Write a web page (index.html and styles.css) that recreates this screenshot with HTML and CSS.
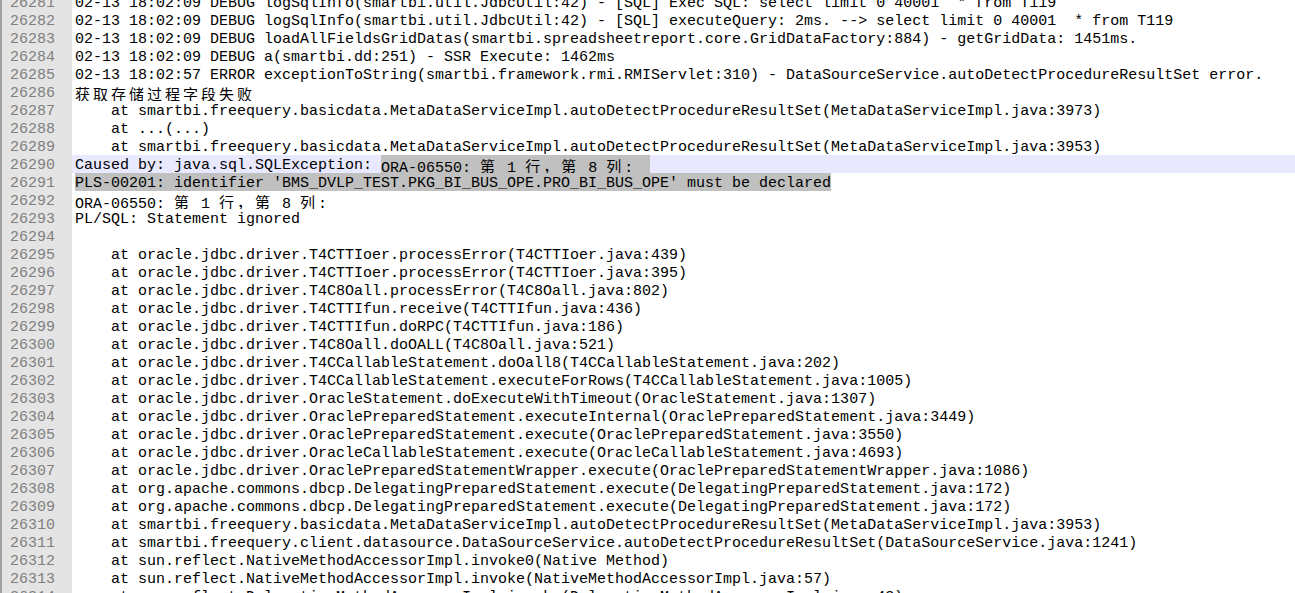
FILE: index.html
```html
<!DOCTYPE html>
<html>
<head>
<meta charset="utf-8">
<title>smartbi.log - Notepad++</title>
<link rel="stylesheet" href="styles.css">
</head>
<body>
<div id="editor">
<div class="row"><span class="num">26281</span><span class="code">02-13 18:02:09 DEBUG logSqlInfo(smartbi.util.JdbcUtil:42) - [SQL] Exec SQL: select limit 0 40001  * from T119</span></div>
<div class="row"><span class="num">26282</span><span class="code">02-13 18:02:09 DEBUG logSqlInfo(smartbi.util.JdbcUtil:42) - [SQL] executeQuery: 2ms. --&gt; select limit 0 40001  * from T119</span></div>
<div class="row"><span class="num">26283</span><span class="code">02-13 18:02:09 DEBUG loadAllFieldsGridDatas(smartbi.spreadsheetreport.core.GridDataFactory:884) - getGridData: 1451ms.</span></div>
<div class="row"><span class="num">26284</span><span class="code">02-13 18:02:09 DEBUG a(smartbi.dd:251) - SSR Execute: 1462ms</span></div>
<div class="row"><span class="num">26285</span><span class="code">02-13 18:02:57 ERROR exceptionToString(smartbi.framework.rmi.RMIServlet:310) - DataSourceService.autoDetectProcedureResultSet error.</span></div>
<div class="row"><span class="num">26286</span><span class="code"><span class="cjk">获取存储过程字段失败</span></span></div>
<div class="row"><span class="num">26287</span><span class="code">    at smartbi.freequery.basicdata.MetaDataServiceImpl.autoDetectProcedureResultSet(MetaDataServiceImpl.java:3973)</span></div>
<div class="row"><span class="num">26288</span><span class="code">    at ...(...)</span></div>
<div class="row"><span class="num">26289</span><span class="code">    at smartbi.freequery.basicdata.MetaDataServiceImpl.autoDetectProcedureResultSet(MetaDataServiceImpl.java:3953)</span></div>
<div class="row current"><span class="num">26290</span><span class="code">Caused by: java.sql.SQLException: <span class="sel eol">ORA-06550: <span class="cjk">第</span> 1 <span class="cjk">行，第</span> 8 <span class="cjk">列</span>:</span></span></div>
<div class="row"><span class="num">26291</span><span class="code"><span class="sel">PLS-00201: identifier 'BMS_DVLP_TEST.PKG_BI_BUS_OPE.PRO_BI_BUS_OPE' must be declared</span></span></div>
<div class="row"><span class="num">26292</span><span class="code">ORA-06550: <span class="cjk">第</span> 1 <span class="cjk">行，第</span> 8 <span class="cjk">列</span>:</span></div>
<div class="row"><span class="num">26293</span><span class="code">PL/SQL: Statement ignored</span></div>
<div class="row"><span class="num">26294</span><span class="code"></span></div>
<div class="row"><span class="num">26295</span><span class="code">    at oracle.jdbc.driver.T4CTTIoer.processError(T4CTTIoer.java:439)</span></div>
<div class="row"><span class="num">26296</span><span class="code">    at oracle.jdbc.driver.T4CTTIoer.processError(T4CTTIoer.java:395)</span></div>
<div class="row"><span class="num">26297</span><span class="code">    at oracle.jdbc.driver.T4C8Oall.processError(T4C8Oall.java:802)</span></div>
<div class="row"><span class="num">26298</span><span class="code">    at oracle.jdbc.driver.T4CTTIfun.receive(T4CTTIfun.java:436)</span></div>
<div class="row"><span class="num">26299</span><span class="code">    at oracle.jdbc.driver.T4CTTIfun.doRPC(T4CTTIfun.java:186)</span></div>
<div class="row"><span class="num">26300</span><span class="code">    at oracle.jdbc.driver.T4C8Oall.doOALL(T4C8Oall.java:521)</span></div>
<div class="row"><span class="num">26301</span><span class="code">    at oracle.jdbc.driver.T4CCallableStatement.doOall8(T4CCallableStatement.java:202)</span></div>
<div class="row"><span class="num">26302</span><span class="code">    at oracle.jdbc.driver.T4CCallableStatement.executeForRows(T4CCallableStatement.java:1005)</span></div>
<div class="row"><span class="num">26303</span><span class="code">    at oracle.jdbc.driver.OracleStatement.doExecuteWithTimeout(OracleStatement.java:1307)</span></div>
<div class="row"><span class="num">26304</span><span class="code">    at oracle.jdbc.driver.OraclePreparedStatement.executeInternal(OraclePreparedStatement.java:3449)</span></div>
<div class="row"><span class="num">26305</span><span class="code">    at oracle.jdbc.driver.OraclePreparedStatement.execute(OraclePreparedStatement.java:3550)</span></div>
<div class="row"><span class="num">26306</span><span class="code">    at oracle.jdbc.driver.OracleCallableStatement.execute(OracleCallableStatement.java:4693)</span></div>
<div class="row"><span class="num">26307</span><span class="code">    at oracle.jdbc.driver.OraclePreparedStatementWrapper.execute(OraclePreparedStatementWrapper.java:1086)</span></div>
<div class="row"><span class="num">26308</span><span class="code">    at org.apache.commons.dbcp.DelegatingPreparedStatement.execute(DelegatingPreparedStatement.java:172)</span></div>
<div class="row"><span class="num">26309</span><span class="code">    at org.apache.commons.dbcp.DelegatingPreparedStatement.execute(DelegatingPreparedStatement.java:172)</span></div>
<div class="row"><span class="num">26310</span><span class="code">    at smartbi.freequery.basicdata.MetaDataServiceImpl.autoDetectProcedureResultSet(MetaDataServiceImpl.java:3953)</span></div>
<div class="row"><span class="num">26311</span><span class="code">    at smartbi.freequery.client.datasource.DataSourceService.autoDetectProcedureResultSet(DataSourceService.java:1241)</span></div>
<div class="row"><span class="num">26312</span><span class="code">    at sun.reflect.NativeMethodAccessorImpl.invoke0(Native Method)</span></div>
<div class="row"><span class="num">26313</span><span class="code">    at sun.reflect.NativeMethodAccessorImpl.invoke(NativeMethodAccessorImpl.java:57)</span></div>
<div class="row"><span class="num">26314</span><span class="code">    at sun.reflect.DelegatingMethodAccessorImpl.invoke(DelegatingMethodAccessorImpl.java:43)</span></div>
</div>
</body>
</html>
```

FILE: styles.css
```css
/* Log viewer in a Notepad++ style editor pane */

* {
	box-sizing: border-box;
}
html, body {
	margin: 0;
	height: 100%;
	overflow: hidden;
	background: #fff;
}
#editor {
	margin-top: -7px; /* first line is scrolled half out of view */
	font-family: "Liberation Mono", "Noto Sans CJK SC", monospace;
	font-size: 15px;
	color: #000;
}

/* rows are 18px, the taller line box just drops the text 2px */
.row {
	display: flex;
	height: 18px;
	line-height: 22px;
	overflow: hidden;
}
.num {
	flex: none;
	width: 72px;
	padding-left: 8px;
	border-left: 2px solid #a0a0a0;
	background: #e4e4e4;
	color: #808080;
}
.code {
	flex: 1;
	padding-left: 3px;
	white-space: pre;
	overflow: hidden;
}
.row.current .code {
	background: #e8e8ff;
}

/* CJK glyphs take two columns of the mono grid */
.cjk {
	font-family: "Noto Sans CJK SC", sans-serif;
	letter-spacing: 3px;
}

/* selected text */
.sel {
	display: inline-block;
	height: 18px;
	vertical-align: top;
	background: #c0c0c0;
}
.sel.eol {
	padding-right: 17px;
}
```
